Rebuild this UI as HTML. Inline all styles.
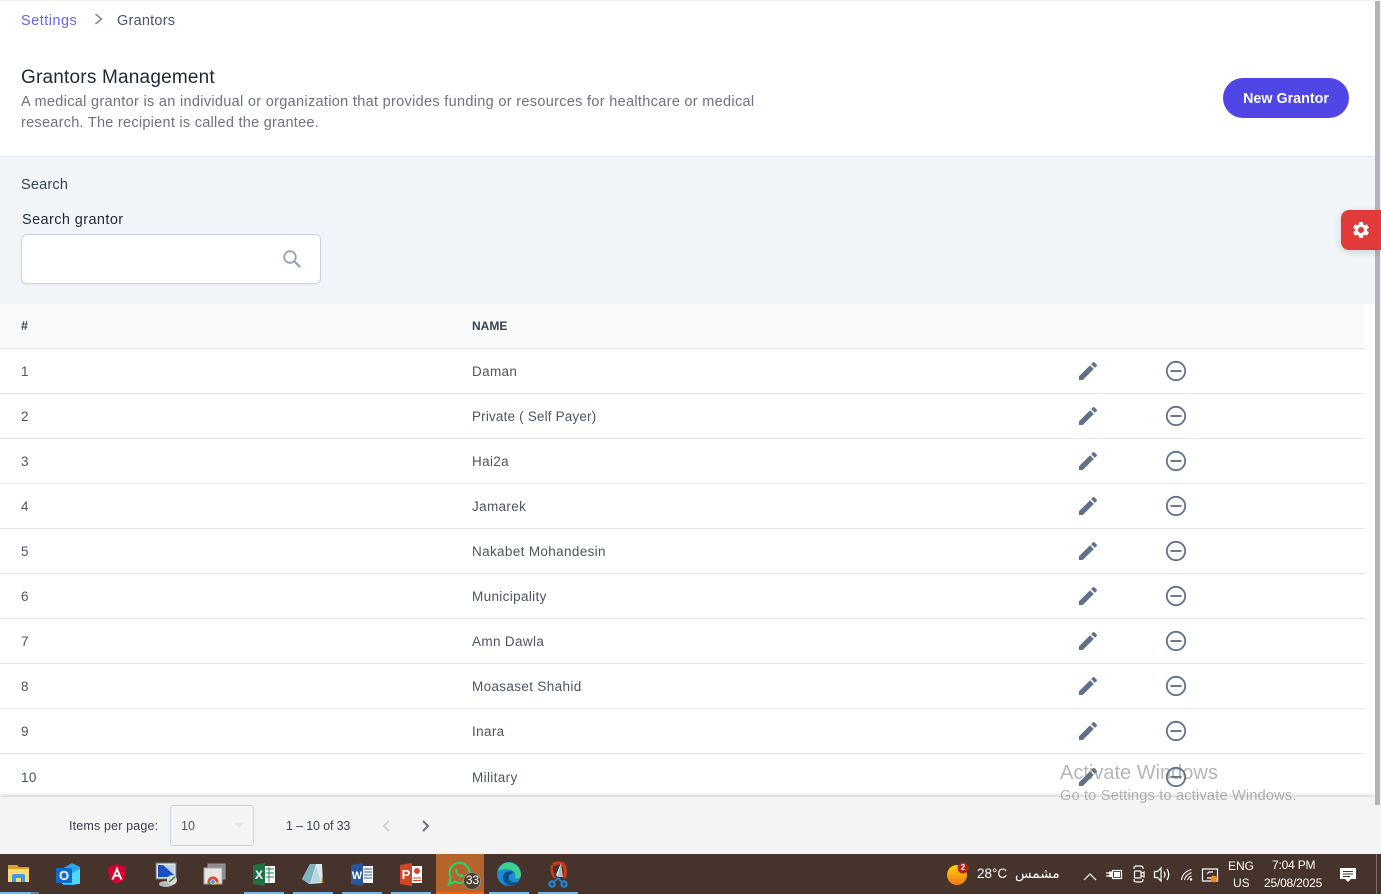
<!DOCTYPE html>
<html><head><meta charset="utf-8"><title>Grantors</title>
<style>
html,body{margin:0;padding:0}
body{width:1381px;height:894px;position:relative;overflow:hidden;background:#fff;font-family:"Liberation Sans",sans-serif;color:#374151}
div,span{position:absolute;white-space:nowrap;box-sizing:border-box}
svg{position:absolute;display:block}
.t{font-size:13.5px;line-height:16px;color:#4b5563;letter-spacing:.35px}
.b{height:1px;left:0;width:1365px;background:#e5e7eb}
</style></head><body>
<div style="left:0;top:0;width:1375px;height:1px;background:#eef0f2"></div>
<div style="left:21px;top:13px;font-size:14.5px;line-height:17px;color:#6366f1;letter-spacing:.48px">Settings</div>
<svg style="left:91px;top:12px" width="14" height="14" viewBox="0 0 14 14"><path d="M4.500 2l6 5-6 5" fill="none" stroke="#6b7280" stroke-width="1.200"/></svg>
<div style="left:117px;top:13px;font-size:14.5px;line-height:17px;color:#4b5563;letter-spacing:.23px">Grantors</div>
<div style="left:21px;top:67px;font-size:19px;line-height:22px;color:#1f2937;letter-spacing:.2px">Grantors Management</div>
<div style="left:21px;top:94px;font-size:14.5px;line-height:17px;color:#6b7280;letter-spacing:.312px">A medical grantor is an individual or organization that provides funding or resources for healthcare or medical</div>
<div style="left:21px;top:115px;font-size:14.5px;line-height:17px;color:#6b7280;letter-spacing:.265px">research. The recipient is called the grantee.</div>
<div style="left:1223px;top:78px;width:126px;height:40px;border-radius:20px;background:#4f46e5;color:#fff;font-size:14.3px;font-weight:bold;line-height:43px;text-align:center;letter-spacing:0">New Grantor</div>

<div style="left:0;top:156px;width:1375px;height:148px;background:#f1f5f9;border-top:1px solid #e2e8f0"></div>
<div style="left:21px;top:177px;font-size:14.5px;line-height:17px;color:#374151;letter-spacing:.2px">Search</div>
<div style="left:22px;top:212px;font-size:14.5px;line-height:17px;color:#1f2937;letter-spacing:.4px">Search grantor</div>
<div style="left:21px;top:234px;width:300px;height:50px;background:#fff;border:1px solid #cbd5e1;border-radius:6px;box-shadow:0 1px 2px rgba(0,0,0,.06)"></div>
<svg style="left:281px;top:248px" width="22" height="22" viewBox="0 0 22 22"><circle cx="9" cy="9" r="5.800" fill="none" stroke="#94a3b8" stroke-width="1.800"/><path d="M13.200 13.200l6 6" stroke="#94a3b8" stroke-width="2.200"/></svg>

<div style="left:0;top:304px;width:1365px;height:44px;background:#f8fafc"></div>
<div style="left:21px;top:318px;font-size:12.5px;font-weight:bold;line-height:16px;color:#374151">#</div>
<div style="left:472px;top:318px;font-size:12px;font-weight:bold;line-height:16px;color:#374151;letter-spacing:0">NAME</div>

<div class="b" style="top:348px"></div>
<div class="b" style="top:393px"></div>
<div class="b" style="top:438px"></div>
<div class="b" style="top:483px"></div>
<div class="b" style="top:528px"></div>
<div class="b" style="top:573px"></div>
<div class="b" style="top:618px"></div>
<div class="b" style="top:663px"></div>
<div class="b" style="top:708px"></div>
<div class="b" style="top:753px"></div>

<div class="t" style="left:21px;top:364px">1</div><div class="t" style="left:472px;top:364px">Daman</div>
<div class="t" style="left:21px;top:409px">2</div><div class="t" style="left:472px;top:409px;letter-spacing:.17px">Private ( Self Payer)</div>
<div class="t" style="left:21px;top:454px">3</div><div class="t" style="left:472px;top:454px">Hai2a</div>
<div class="t" style="left:21px;top:499px">4</div><div class="t" style="left:472px;top:499px">Jamarek</div>
<div class="t" style="left:21px;top:544px">5</div><div class="t" style="left:472px;top:544px">Nakabet Mohandesin</div>
<div class="t" style="left:21px;top:589px">6</div><div class="t" style="left:472px;top:589px">Municipality</div>
<div class="t" style="left:21px;top:634px">7</div><div class="t" style="left:472px;top:634px">Amn Dawla</div>
<div class="t" style="left:21px;top:679px">8</div><div class="t" style="left:472px;top:679px">Moasaset Shahid</div>
<div class="t" style="left:21px;top:724px">9</div><div class="t" style="left:472px;top:724px">Inara</div>
<div class="t" style="left:21px;top:770px">10</div><div class="t" style="left:472px;top:770px">Military</div>

<svg style="left:0;top:0" width="1381" height="894" viewBox="0 0 1381 894">
<defs>
<path id="pen" d="M3 17.250V21h3.750L17.810 9.940l-3.750-3.750L3 17.250zM20.710 7.040c.39-.39.39-1.020 0-1.410l-2.340-2.340c-.39-.39-1.020-.39-1.410 0l-1.830 1.830 3.750 3.750 1.830-1.830z" fill="#5f7189"/>
<g id="min"><circle cx="0" cy="0" r="9.200" fill="none" stroke="#5f7189" stroke-width="1.800"/><path d="M-5.500 0H5.500" stroke="#5f7189" stroke-width="1.900"/></g>
</defs>
<use href="#pen" x="1076" y="359"/><use href="#min" x="1176" y="371"/>
<use href="#pen" x="1076" y="404"/><use href="#min" x="1176" y="416"/>
<use href="#pen" x="1076" y="449"/><use href="#min" x="1176" y="461"/>
<use href="#pen" x="1076" y="494"/><use href="#min" x="1176" y="506"/>
<use href="#pen" x="1076" y="539"/><use href="#min" x="1176" y="551"/>
<use href="#pen" x="1076" y="584"/><use href="#min" x="1176" y="596"/>
<use href="#pen" x="1076" y="629"/><use href="#min" x="1176" y="641"/>
<use href="#pen" x="1076" y="674"/><use href="#min" x="1176" y="686"/>
<use href="#pen" x="1076" y="719"/><use href="#min" x="1176" y="731"/>
<use href="#pen" x="1076" y="765"/><use href="#min" x="1176" y="777"/>
</svg>

<!-- footer -->
<div style="left:0;top:797px;width:1375px;height:57px;background:#f4f4f5;box-shadow:0 -2px 3px rgba(0,0,0,.16)"></div>
<div style="left:69px;top:818px;font-size:12.5px;line-height:16px;color:#374151;letter-spacing:.16px">Items per page:</div>
<div style="left:170px;top:805px;width:84px;height:41px;border:1px solid #cbd5e1;border-radius:3px"></div>
<div style="left:181px;top:818px;font-size:12.5px;line-height:16px;color:#4b5563">10</div>
<svg style="left:233px;top:823px" width="12" height="6" viewBox="0 0 12 6"><path d="M1 0h10L6 5z" fill="#e2e8f0"/></svg>
<div style="left:286px;top:818px;font-size:12.5px;line-height:16px;color:#374151;letter-spacing:-.15px">1 – 10 of 33</div>
<svg style="left:379px;top:818px" width="14" height="16" viewBox="0 0 14 16"><path d="M10 3L5 8l5 5" fill="none" stroke="#d1d5db" stroke-width="2"/></svg>
<svg style="left:419px;top:818px" width="14" height="16" viewBox="0 0 14 16"><path d="M4 3l5 5-5 5" fill="none" stroke="#6b7280" stroke-width="2"/></svg>

<!-- scrollbar -->
<div style="left:1375px;top:0;width:6px;height:854px;background:#f3f5f8"></div>
<div style="left:1375px;top:1px;width:5px;height:804px;background:#b0b5b9"></div>

<!-- settings tab -->
<div style="left:1341px;top:210px;width:40px;height:40px;background:#e03a3a;border-radius:8px 0 0 8px;box-shadow:0 2px 8px rgba(0,0,0,.15)"></div>
<svg style="left:1351px;top:220px" width="20" height="20" viewBox="0 0 24 24"><path fill="#fff" d="M19.140 12.940c.04-.3.06-.61.06-.94 0-.32-.02-.64-.07-.94l2.030-1.580c.18-.14.23-.41.12-.61l-1.920-3.320c-.12-.22-.37-.29-.59-.22l-2.390.96c-.5-.38-1.030-.7-1.620-.94l-.36-2.540c-.04-.24-.24-.41-.48-.41h-3.840c-.24 0-.43.17-.47.41l-.36 2.540c-.59.24-1.130.57-1.620.94l-2.390-.96c-.22-.08-.47 0-.59.22L2.740 8.870c-.12.21-.08.47.12.61l2.030 1.580c-.05.3-.09.63-.09.94s.02.64.07.94l-2.030 1.580c-.18.14-.23.41-.12.61l1.920 3.320c.12.22.37.29.59.22l2.390-.96c.5.38 1.030.7 1.620.94l.36 2.540c.05.24.24.41.48.41h3.840c.24 0 .44-.17.47-.41l.36-2.540c.59-.24 1.130-.56 1.620-.94l2.390.96c.22.08.47 0 .59-.22l1.920-3.320c.12-.22.07-.47-.12-.61l-2.010-1.580zM12 15.600c-1.980 0-3.600-1.620-3.600-3.600s1.620-3.600 3.600-3.600 3.600 1.620 3.600 3.600-1.620 3.600-3.600 3.600z"/></svg>

<!-- taskbar -->
<div style="left:0;top:854px;width:1381px;height:40px;background:#46342c"></div>
<div style="left:436px;top:854px;width:48px;height:40px;background:#b5652b"></div>
<div style="left:0;top:892px;width:31px;height:2px;background:#76b9ed"></div>
<div style="left:31px;top:892px;width:8px;height:2px;background:#5a87a8"></div>
<div style="left:244px;top:892px;width:40px;height:2px;background:#76b9ed"></div>
<div style="left:293px;top:892px;width:40px;height:2px;background:#76b9ed"></div>
<div style="left:342px;top:892px;width:40px;height:2px;background:#76b9ed"></div>
<div style="left:391px;top:892px;width:40px;height:2px;background:#76b9ed"></div>
<div style="left:436px;top:892px;width:48px;height:2px;background:#f7630c"></div>
<div style="left:489px;top:892px;width:40px;height:2px;background:#76b9ed"></div>
<div style="left:538px;top:892px;width:40px;height:2px;background:#76b9ed"></div>

<svg style="left:0;top:854px" width="600" height="40" viewBox="0 0 600 40">
<!-- explorer -->
<path d="M8 11h9l2 2h10v15H8z" fill="#d9a02b"/><rect x="8" y="15" width="21" height="13" fill="#fcd977"/><path d="M12 28v-6a2 2 0 0 1 2-2h9a2 2 0 0 1 2 2v6h-4v-4h-5v4z" fill="#3d9be0"/>
<!-- outlook -->
<path d="M62 15l10-6 8 4v15l-5 3H63z" fill="#28a8ea"/><path d="M62 24l18-9v14a1 1 0 0 1-1 1H62z" fill="#50d9ff"/><rect x="56" y="14" width="16" height="15" rx="1" fill="#0f6cce"/><text x="64" y="26" font-size="13" font-weight="bold" fill="#fff" text-anchor="middle" font-family="Liberation Sans,sans-serif">O</text>
<!-- angular -->
<path d="M117 10l9 3.200-1.400 12.300L117 30l-7.600-4.500L108 13.200z" fill="#d6002f"/><path d="M117 12.500l-5.500 13h2.300l1.100-2.900h4.200l1.100 2.900h2.300zM115.600 20.800l1.400-3.600 1.400 3.600z" fill="#fff"/>
<!-- rdp -->
<rect x="156" y="9" width="20" height="16" fill="#dfe3ea" stroke="#6a7078"/><path d="M158 11h16v12h-16z" fill="#1a4fc0"/><path d="M163 11h11v10z" fill="#bcd0f0"/><ellipse cx="166" cy="30" rx="7" ry="3" fill="#b8bcc0"/><circle cx="172" cy="26" r="5" fill="#d8dcd8"/><path d="M169 28l6-5" stroke="#3a8a3a" stroke-width="1.500"/>
<!-- chrome window -->
<rect x="208" y="10" width="17" height="15" fill="#8a8a88" stroke="#9c9c9a"/><rect x="204" y="14" width="18" height="16" fill="#e6e6e4" stroke="#a4a4a2"/><circle cx="213" cy="28" r="5.500" fill="#db4437"/><path d="M213 28l-5 0a5.500 5.500 0 0 0 7 5z" fill="#31a853"/><path d="M213 28l5 0a5.500 5.500 0 0 1-3 5z" fill="#fbbc05"/><circle cx="213" cy="28" r="2.300" fill="#4285f4" stroke="#fff" stroke-width=".8"/><rect x="203" y="30.500" width="20" height="3" fill="#46342c"/>
<!-- excel -->
<rect x="264" y="12" width="11" height="17" fill="#fff"/><path d="M266 15h8M266 19h8M266 23h8M269 13v15" stroke="#2a7d50"/><path d="M253 11l12-2v23l-12-2z" fill="#1e7145"/><text x="259" y="25" font-size="12" font-weight="bold" fill="#fff" text-anchor="middle" font-family="Liberation Sans,sans-serif">X</text>
<!-- notepad -->
<path d="M310 10l12 0 1 19-14 1-7-5z" fill="#dce9ec"/><path d="M302 25l8-15 6 0-6 20z" fill="#7fb2c0"/><path d="M316 12l5 16-10 1z" fill="#b6d6de"/><path d="M322 22l1.500 7-2 0z" fill="#b87c2a"/>
<!-- word -->
<rect x="362" y="12" width="11" height="17" fill="#fff"/><path d="M364 15h8M364 18h8M364 21h8M364 24h8" stroke="#2b579a"/><path d="M351 11l12-2v23l-12-2z" fill="#2b579a"/><text x="357" y="25" font-size="11" font-weight="bold" fill="#fff" text-anchor="middle" font-family="Liberation Sans,sans-serif">W</text>
<!-- ppt -->
<rect x="411" y="12" width="11" height="17" fill="#fff"/><circle cx="417" cy="17" r="3" fill="#d24726"/><path d="M413 24h8M413 26.500h8" stroke="#d24726"/><path d="M400 11l12-2v23l-12-2z" fill="#d24726"/><text x="406" y="25" font-size="13" font-weight="bold" fill="#fff" text-anchor="middle" font-family="Liberation Sans,sans-serif">P</text>
<!-- whatsapp -->
<path d="M449 30l1.800-6.300a10 10 0 1 1 4 4z" fill="none" stroke="#25d366" stroke-width="2.200"/><path d="M456 15c-1.500 1-1 3 1 5.500s4 3.500 5.500 2.500l1-1.500-2.500-1.500-1 1c-1-.5-2.500-2-3-3l1-1-1-2.500z" fill="#25d366"/>
<circle cx="472" cy="27" r="8.500" fill="#4e4238" stroke="#9a8c80" stroke-width=".8"/>
<!-- edge -->
<circle cx="509" cy="20" r="12" fill="#1b8bd6"/><path d="M498 17c2-7 9-10 14-8 6 2 9 7 9 12 0 3-3 4-6 3 1-3 0-7-4-8-6-2-11 0-13 1z" fill="#3dd08f"/><path d="M503 24c0-4 3-7 7-7 2 0 3 1 4 2-4 0-6 3-5 6 1 3 5 4 9 3-3 3-7 4-10 3-3-2-5-4-5-7z" fill="#0b4f8a"/>
<!-- snip -->
<path d="M553 11a9 9 0 0 1 10-1c3 4 3 10 1 14" fill="none" stroke="#c9381a" stroke-width="3.500"/><path d="M552 11c-1 5 0 9 3 13" fill="none" stroke="#c9381a" stroke-width="2.500"/><path d="M561 9l-3 14-2-2z" fill="#e8e8e8"/><path d="M561 9l2 14-5 0z" fill="#b8b8b8"/><circle cx="552" cy="30" r="2.600" fill="none" stroke="#1e88d8" stroke-width="2.200"/><circle cx="564" cy="30" r="2.600" fill="none" stroke="#1e88d8" stroke-width="2.200"/><path d="M554 28l4-4 4 4" fill="none" stroke="#1e88d8" stroke-width="1.600"/>
</svg>
<div style="left:465px;top:873px;width:15px;text-align:center;font-size:12px;line-height:15px;color:#fff">33</div>

<svg style="left:930px;top:854px" width="451" height="40" viewBox="0 0 451 40">
<defs><linearGradient id="sun" x1="0" y1="0" x2="0" y2="1"><stop offset="0" stop-color="#ffd400"/><stop offset="1" stop-color="#f07a1c"/></linearGradient></defs>
<circle cx="27" cy="21" r="10" fill="url(#sun)"/><circle cx="33" cy="14" r="5.500" fill="#b3261e"/>
<g fill="none" stroke="#fff" stroke-width="1.200">
<path d="M154 26l6-6 6 6"/>
<!-- battery plug -->
<path d="M176 19h3M176 22h3"/><rect x="179" y="17.500" width="3" height="5.500" fill="#fff" stroke="none"/><rect x="182.500" y="16.500" width="9" height="8"/><rect x="184" y="18" width="6" height="5" fill="#fff" stroke="none"/>
<!-- camera -->
<path d="M204 15v-1q0-2 3-2h3q3 0 3 2v1M204 25v1q0 2 3 2h3q3 0 3-2v-1"/>
<rect x="204.500" y="17" width="6.500" height="7" rx="1"/><path d="M211 19.500l3-1.500v5l-3-1.500"/>
<!-- speaker -->
<path d="M224.500 17.500h3l3.500-3.500v13l-3.500-3.500h-3zM234 17.500q2 3 0 6M237 15q3.500 5.500 0 11"/>
<!-- wifi -->
<path d="M251.500 26q1-8 10-10.500M254.500 26q1-5 7-7.500M257.500 26q1-3 4-4" stroke-width="1"/>
<!-- action box -->
<path d="M272.500 15h15v12h-15z"/>
<path d="M277 20l2-2h4M283 22l-2 2h-4" />
</g>
<circle cx="261" cy="25.500" r="1.200" fill="#fff"/>
<circle cx="284" cy="25" r="3.300" fill="#f28a18"/>
<path d="M410 14h16v11h-5l-3 3-3-3h-5z" fill="#fff"/><path d="M413 17.500h10M413 20h10M413 22.500h7" stroke="#46342c" stroke-width="1"/>
<rect x="446" y="0" width="1" height="40" fill="#7d6e66"/>
</svg>
<div style="left:959px;top:863px;width:8px;text-align:center;font-size:8px;line-height:10px;font-weight:bold;color:#fff">2</div>
<div style="left:977px;top:866px;font-size:13.5px;line-height:16px;color:#fff">28°C</div>
<div style="left:1015px;top:866px;font-size:13.6px;line-height:16px;color:#fff;font-family:'DejaVu Sans',sans-serif">مشمس</div>
<div style="left:1228px;top:859px;font-size:12px;line-height:14px;color:#fff">ENG</div>
<div style="left:1233px;top:876px;font-size:12px;line-height:14px;color:#fff">US</div>
<div style="left:1272px;top:858px;font-size:12px;line-height:14px;color:#fff;letter-spacing:-.2px">7:04 PM</div>
<div style="left:1264px;top:876px;font-size:12px;line-height:14px;color:#fff;letter-spacing:-.2px">25/08/2025</div>

<!-- activation watermark -->
<div style="left:1060px;top:761px;font-size:20px;line-height:24px;color:rgba(120,120,120,.55);letter-spacing:0">Activate Windows</div>
<div style="left:1060px;top:787px;font-size:14.5px;line-height:18px;color:rgba(120,120,120,.55);letter-spacing:.22px">Go to Settings to activate Windows.</div>
</body></html>
